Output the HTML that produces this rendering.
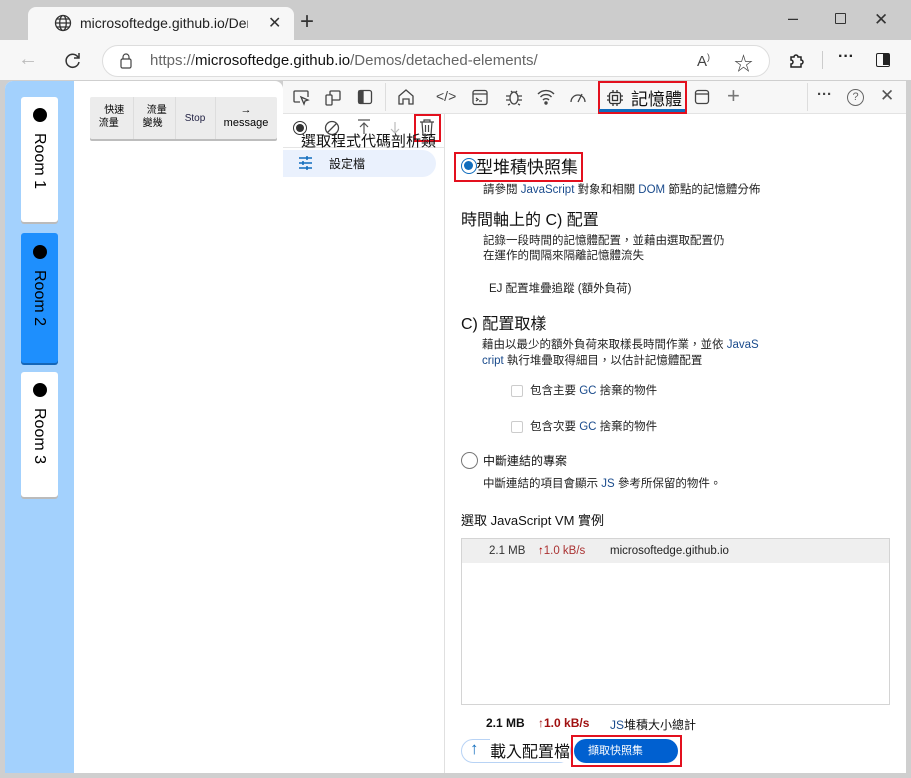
<!DOCTYPE html>
<html><head><meta charset="utf-8"><style>
*{box-sizing:border-box;margin:0;padding:0}
body{width:911px;height:778px;overflow:hidden;background:#cfcfcf;font-family:"Liberation Sans","Noto Sans CJK TC",sans-serif;color:#000;position:relative}
.a{position:absolute}
svg{position:absolute}
</style></head><body>
<div class="a" style="left:0;top:0;width:911px;height:40px;background:#cccccc"></div>
<div class="a" style="left:28px;top:7px;width:266px;height:35px;background:#f7f7f7;border-radius:8px 8px 0 0"></div>
<svg style="left:54px;top:14px" width="18" height="18" viewBox="0 0 18 18" fill="none" stroke="#333" stroke-width="1.3"><circle cx="9" cy="9" r="7.5"/><ellipse cx="9" cy="9" rx="3.3" ry="7.5"/><path d="M1.5 9h15M3 5h12M3 13h12"/></svg>
<div class="a" style="left:80px;top:15px;font-size:14px;color:#222;white-space:nowrap;width:168px;overflow:hidden">microsoftedge.github.io/Demos/d</div>
<div class="a" style="left:268px;top:13px;font-size:16px;color:#333">✕</div>
<div class="a" style="left:300px;top:8px;font-size:24px;color:#333;font-weight:300">+</div>
<div class="a" style="left:788px;top:8px;font-size:18px;color:#333">–</div>
<div class="a" style="left:835px;top:13px;width:11px;height:11px;border:1.3px solid #333;border-radius:1px"></div>
<div class="a" style="left:874px;top:10px;font-size:17px;color:#333">✕</div>
<div class="a" style="left:0;top:40px;width:911px;height:40px;background:#f7f7f7"></div>
<div class="a" style="left:18px;top:48px;font-size:20px;color:#bbb">←</div>
<svg style="left:63px;top:50px" width="20" height="20" viewBox="0 0 20 20" fill="none" stroke="#333" stroke-width="1.5"><path d="M15.5 8A6.5 6.5 0 1 0 16 12"/><path d="M16 3v5h-5"/></svg>
<div class="a" style="left:102px;top:45px;width:668px;height:32px;background:#fff;border:1px solid #ddd;border-radius:16px"></div>
<svg style="left:120px;top:53px" width="12" height="16" viewBox="0 0 12 16" fill="none" stroke="#444" stroke-width="1.2"><rect x="1" y="6" width="10" height="9" rx="1.5"/><path d="M3 6V4a3 3 0 0 1 6 0v2"/></svg>
<div class="a" style="left:150px;top:52px;font-size:15px;color:#666;white-space:nowrap">https://<span style="color:#111">microsoftedge.github.io</span>/Demos/detached-elements/</div>
<div class="a" style="left:697px;top:52px;font-size:15px;color:#444">A<sup style="font-size:9px">)</sup></div>
<div class="a" style="left:734px;top:49px;font-size:19px;color:#444">☆</div>
<svg style="left:787px;top:51px" width="19" height="19" viewBox="0 0 19 19" fill="none" stroke="#222" stroke-width="1.5"><path d="M4 6h3a2 2 0 1 1 4 0h3v3a2 2 0 1 1 0 4v3H4v-3a2 2 0 1 0 0-4z"/></svg>
<div class="a" style="left:822px;top:51px;width:1px;height:18px;background:#ccc"></div>
<div class="a" style="left:838px;top:48px;font-size:16px;color:#222;font-weight:bold">···</div>
<div class="a" style="left:876px;top:53px;width:14px;height:14px;border:1.5px solid #222;border-radius:2px"><div style="position:absolute;right:0;top:0;width:6px;height:11px;background:#222"></div></div>
<div class="a" style="left:5px;top:81px;width:278px;height:692px;background:#fff;border-radius:8px 8px 0 0"></div>
<div class="a" style="left:5px;top:81px;width:69px;height:692px;background:#a3d1fd;border-radius:8px 0 0 0"></div>
<div class="a" style="left:21px;top:97px;width:37px;height:125px;background:#fff;border-radius:3px;box-shadow:0 2px 0 #bbb"></div>
<div class="a" style="left:33px;top:108px;width:14px;height:14px;border-radius:50%;background:#000"></div>
<div class="a" style="left:30px;top:133px;writing-mode:vertical-rl;font-size:16px">Room 1</div>
<div class="a" style="left:21px;top:233px;width:37px;height:130px;background:#1e8ffd;border-radius:3px;box-shadow:0 2px 0 #1466b8"></div>
<div class="a" style="left:33px;top:245px;width:14px;height:14px;border-radius:50%;background:#000"></div>
<div class="a" style="left:30px;top:270px;writing-mode:vertical-rl;font-size:16px">Room 2</div>
<div class="a" style="left:21px;top:372px;width:37px;height:125px;background:#fff;border-radius:3px;box-shadow:0 2px 0 #bbb"></div>
<div class="a" style="left:33px;top:383px;width:14px;height:14px;border-radius:50%;background:#000"></div>
<div class="a" style="left:30px;top:408px;writing-mode:vertical-rl;font-size:16px">Room 3</div>
<div class="a" style="left:90px;top:97px;width:187px;height:42px;background:#ececec;border-radius:2px;box-shadow:0 2px 0 #bdbdbd"></div>
<div class="a" style="left:133px;top:97px;width:1px;height:42px;background:#ddd"></div>
<div class="a" style="left:175px;top:97px;width:1px;height:42px;background:#ddd"></div>
<div class="a" style="left:215px;top:97px;width:1px;height:42px;background:#ddd"></div>
<div class="a" style="left:90px;top:104px;width:43px;font-size:10px;line-height:13px;text-align:center">&nbsp;&nbsp;快速<br>流量&nbsp;&nbsp;</div>
<div class="a" style="left:133px;top:104px;width:42px;font-size:10px;line-height:13px;text-align:center">&nbsp;&nbsp;流量<br>變幾&nbsp;</div>
<div class="a" style="left:175px;top:113px;width:40px;font-size:10px;text-align:center;color:#224">Stop</div>
<div class="a" style="left:215px;top:104px;width:62px;font-size:11px;line-height:13px;text-align:center">→<br>message</div>
<div class="a" style="left:283px;top:81px;width:623px;height:692px;background:#fff"></div>
<div class="a" style="left:283px;top:81px;width:623px;height:33px;background:#f7f7f7;border-bottom:1px solid #e3e3e3"></div>
<svg style="left:292px;top:89px" width="18" height="18" viewBox="0 0 18 18" fill="none" stroke="#444" stroke-width="1.3"><path d="M8 13H3a1 1 0 0 1-1-1V3a1 1 0 0 1 1-1h12a1 1 0 0 1 1 1v5"/><path d="M9 8l7 3-3 1-1 3z"/></svg>
<svg style="left:324px;top:89px" width="18" height="18" viewBox="0 0 18 18" fill="none" stroke="#444" stroke-width="1.3"><rect x="6" y="2" width="10" height="9" rx="1"/><rect x="2" y="6" width="6" height="10" rx="1" fill="#f7f7f7"/></svg>
<svg style="left:357px;top:89px" width="16" height="16" viewBox="0 0 16 16" fill="none" stroke="#444" stroke-width="1.3"><rect x="1.5" y="1.5" width="13" height="13" rx="2"/><rect x="2" y="2" width="4" height="12" fill="#444"/></svg>
<div class="a" style="left:385px;top:83px;width:1px;height:28px;background:#ddd"></div>
<svg style="left:397px;top:88px" width="18" height="18" viewBox="0 0 18 18" fill="none" stroke="#444" stroke-width="1.3"><path d="M2 8l7-6 7 6v8h-4v-5H6v5H2z"/></svg>
<div class="a" style="left:436px;top:88px;font-size:14px;color:#444">&lt;/&gt;</div>
<svg style="left:471px;top:89px" width="18" height="17" viewBox="0 0 18 17" fill="none" stroke="#444" stroke-width="1.3"><rect x="2" y="1.5" width="14" height="14" rx="2"/><path d="M2 5h14M5 9l2 1.5L5 12M8 12h3"/></svg>
<svg style="left:505px;top:88px" width="18" height="18" viewBox="0 0 18 18" fill="none" stroke="#444" stroke-width="1.3"><ellipse cx="9" cy="10" rx="4" ry="6"/><path d="M5 8H1M5 12H1M13 8h4M13 12h4M6 3l2 2M12 3l-2 2M5 16l-2 1M13 16l2 1"/></svg>
<svg style="left:537px;top:89px" width="18" height="16" viewBox="0 0 18 16" fill="none" stroke="#444" stroke-width="1.4"><path d="M1 5a11 11 0 0 1 16 0M3.5 8a7.5 7.5 0 0 1 11 0M6 11a4 4 0 0 1 6 0"/><circle cx="9" cy="14" r="1" fill="#444"/></svg>
<svg style="left:569px;top:89px" width="18" height="16" viewBox="0 0 18 16" fill="none" stroke="#444" stroke-width="1.3"><path d="M2 13a7 7 0 0 1 14 0"/><path d="M9 13l4-8"/></svg>
<div class="a" style="left:598px;top:81px;width:89px;height:33px;border:2px solid #e3101e"></div>
<div class="a" style="left:599px;top:109px;width:86px;height:3px;background:#0f6cbd"></div>
<svg style="left:606px;top:89px" width="18" height="18" viewBox="0 0 18 18" fill="none" stroke="#333" stroke-width="1.3"><rect x="3.5" y="3.5" width="11" height="11" rx="2"/><rect x="6.5" y="6.5" width="5" height="5"/><path d="M7 1v2.5M11 1v2.5M7 14.5V17M11 14.5V17M1 7h2.5M1 11h2.5M14.5 7H17M14.5 11H17"/></svg>
<div class="a" style="left:631px;top:85px;font-size:17px;color:#111">記憶體</div>
<svg style="left:694px;top:89px" width="16" height="16" viewBox="0 0 16 16" fill="none" stroke="#444" stroke-width="1.3"><rect x="1.5" y="1.5" width="13" height="13" rx="2.5"/><path d="M1.5 5h13"/></svg>
<div class="a" style="left:727px;top:83px;font-size:22px;color:#777;font-weight:300">+</div>
<div class="a" style="left:807px;top:83px;width:1px;height:28px;background:#ddd"></div>
<div class="a" style="left:817px;top:86px;font-size:15px;color:#444;font-weight:bold">···</div>
<div class="a" style="left:847px;top:89px;width:17px;height:17px;border:1.3px solid #666;border-radius:50%;font-size:11px;text-align:center;line-height:15px;color:#666">?</div>
<div class="a" style="left:880px;top:86px;font-size:17px;color:#555">✕</div>
<div class="a" style="left:444px;top:114px;width:1px;height:659px;background:#e0e0e0"></div>
<div class="a" style="left:283px;top:147px;width:161px;height:1px;background:#e5e5e5"></div>
<div class="a" style="left:293px;top:121px;width:14px;height:14px;border:1.3px solid #333;border-radius:50%"><div style="position:absolute;left:2px;top:2px;width:8px;height:8px;border-radius:50%;background:#333"></div></div>
<svg style="left:324px;top:120px" width="16" height="16" viewBox="0 0 16 16" fill="none" stroke="#444" stroke-width="1.3"><circle cx="8" cy="8" r="6.5"/><path d="M3.5 12.5l9-9"/></svg>
<svg style="left:357px;top:119px" width="14" height="16" viewBox="0 0 14 16" fill="none" stroke="#555" stroke-width="1.2"><path d="M1 1h12M7 4v11M3 8l4-4 4 4"/></svg>
<svg style="left:388px;top:121px" width="14" height="16" viewBox="0 0 14 16" fill="none" stroke="#bbb" stroke-width="1.2"><path d="M7 1v11M3 8l4 4 4-4"/></svg>
<div class="a" style="left:414px;top:114px;width:27px;height:28px;border:2px solid #e3101e"></div>
<svg style="left:419px;top:118px" width="16" height="18" viewBox="0 0 16 18" fill="none" stroke="#444" stroke-width="1.2"><path d="M1 4h14M5 4V2h6v2M3 4l1 13h8l1-13M6.5 7v7M9.5 7v7"/></svg>
<div class="a" style="left:301px;top:130px;font-size:15px;color:#111;white-space:nowrap">選取程式代碼剖析類</div>
<div class="a" style="left:283px;top:150px;width:153px;height:27px;background:#eaf1fd;border-radius:0 14px 14px 0"></div>
<svg style="left:298px;top:156px" width="15" height="14" viewBox="0 0 15 14" fill="none" stroke="#0f6cbd" stroke-width="1.5"><path d="M1 2h13M1 7h13M1 12h13"/><path d="M9 0v4M5 5v4M9 10v4"/></svg>
<div class="a" style="left:329px;top:155px;font-size:12px;color:#111">設定檔</div>
<div class="a" style="left:454px;top:152px;width:129px;height:30px;border:2px solid #e3101e"></div>
<div class="a" style="left:461px;top:158px;width:16px;height:16px;border-radius:50%;border:1.5px solid #0f6cbd;background:#fff"><div style="position:absolute;left:2px;top:2px;width:9px;height:9px;border-radius:50%;background:#0f6cbd"></div></div>
<div class="a" style="left:476px;top:153px;font-size:17px;color:#111">型堆積快照集</div>
<div class="a" style="left:483px;top:181px;font-size:11.5px;color:#222;white-space:nowrap">請參閱 <span style="color:#1a4b8c">JavaScript</span> 對象和相關 <span style="color:#1a4b8c">DOM</span> 節點的記憶體分佈</div>
<div class="a" style="left:461px;top:206px;font-size:16px;color:#111">時間軸上的 C) 配置</div>
<div class="a" style="left:483px;top:234px;font-size:11.5px;line-height:15px;color:#222">記錄一段時間的記憶體配置，並藉由選取配置仍<br>在運作的間隔來隔離記憶體流失</div>
<div class="a" style="left:489px;top:280px;font-size:11.5px;color:#222">EJ 配置堆疊追蹤 (額外負荷)</div>
<div class="a" style="left:461px;top:310px;font-size:16px;color:#111">C) 配置取樣</div>
<div class="a" style="left:482px;top:337px;font-size:11.5px;line-height:16px;color:#222">藉由以最少的額外負荷來取樣長時間作業，並依 <span style="color:#1a4b8c">JavaS</span><br><span style="color:#1a4b8c">cript</span> 執行堆疊取得細目，以估計記憶體配置</div>
<div class="a" style="left:511px;top:385px;width:12px;height:12px;border:1px solid #ccc;border-radius:2px"></div>
<div class="a" style="left:530px;top:382px;font-size:11.5px;color:#222">包含主要 <span style="color:#1a4b8c">GC</span> 捨棄的物件</div>
<div class="a" style="left:511px;top:421px;width:12px;height:12px;border:1px solid #ccc;border-radius:2px"></div>
<div class="a" style="left:530px;top:418px;font-size:11.5px;color:#222">包含次要 <span style="color:#1a4b8c">GC</span> 捨棄的物件</div>
<div class="a" style="left:461px;top:452px;width:17px;height:17px;border-radius:50%;border:1.3px solid #777"></div>
<div class="a" style="left:483px;top:452px;font-size:12px;color:#111">中斷連結的專案</div>
<div class="a" style="left:483px;top:475px;font-size:11.5px;color:#222">中斷連結的項目會顯示 <span style="color:#1a4b8c">JS</span> 參考所保留的物件。</div>
<div class="a" style="left:461px;top:510px;font-size:13px;color:#111">選取 JavaScript VM 實例</div>
<div class="a" style="left:461px;top:538px;width:429px;height:167px;border:1px solid #d4d4d4"></div>
<div class="a" style="left:462px;top:539px;width:427px;height:24px;background:#efefef"></div>
<div class="a" style="left:489px;top:545px;font-size:11.5px;color:#333">2.1 MB</div>
<div class="a" style="left:538px;top:545px;font-size:11.5px;color:#a33"><b style="color:#a00">↑</b>1.0 kB/s</div>
<div class="a" style="left:610px;top:545px;font-size:11.5px;color:#222">microsoftedge.github.io</div>
<div class="a" style="left:486px;top:716px;font-size:12px;font-weight:bold;color:#111">2.1 MB</div>
<div class="a" style="left:538px;top:716px;font-size:12px;font-weight:bold;color:#a01010">↑1.0 kB/s</div>
<div class="a" style="left:610px;top:716px;font-size:12px;color:#111"><span style="color:#1a4b8c">JS</span>堆積大小總計</div>
<div class="a" style="left:461px;top:739px;width:110px;height:24px;border:1px solid #b8d3f5;border-radius:12px"></div>
<div class="a" style="left:470px;top:739px;font-size:17px;color:#0f6cbd">↑</div>
<div class="a" style="left:490px;top:738px;font-size:16px;color:#111;background:#fff">載入配置檔</div>
<div class="a" style="left:571px;top:735px;width:111px;height:32px;border:2px solid #e3101e"></div>
<div class="a" style="left:574px;top:739px;width:104px;height:24px;background:#0060d0;border-radius:12px;color:#fff;font-size:11px;line-height:24px;padding-left:14px">擷取快照集</div>
</body></html>
